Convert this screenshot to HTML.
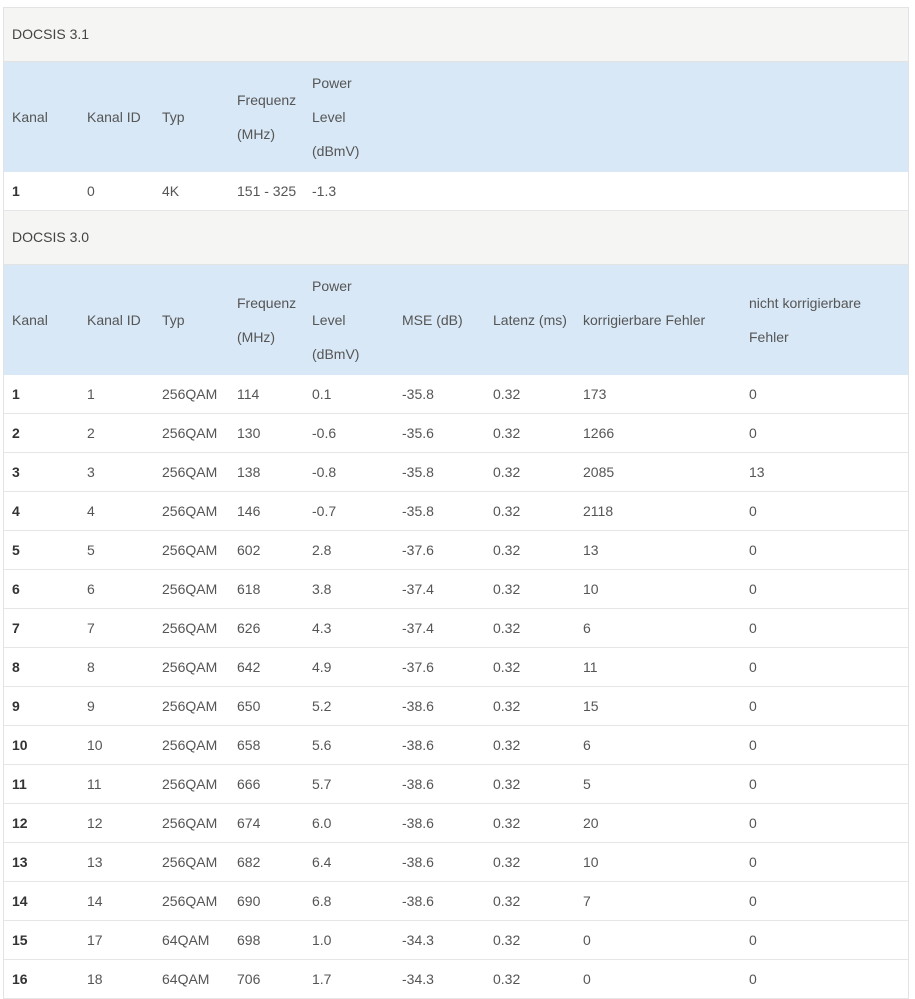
<!DOCTYPE html>
<html><head><meta charset="utf-8"><style>
body{margin:0;background:#fff;font-family:"Liberation Sans",sans-serif;font-size:14px;color:#555;}
.wrap{position:absolute;left:3px;top:7px;width:904px;border:1px solid #e3e3e3;border-bottom:none;}
.title{height:53px;background:#f5f5f3;line-height:53px;padding-left:8px;border-bottom:1px solid #e3e3e3;color:#444;}
.hdr{height:110px;background:#d8e8f6;display:flex;align-items:center;padding-left:8px;box-sizing:border-box;}
.row{height:38px;display:flex;align-items:center;padding-left:8px;border-bottom:1px solid #e6e6e6;background:#fff;}
.c{flex:none;line-height:34px;white-space:nowrap;}
.c1,.c2,.c3,.c4{width:75px}.c5{width:90px}.c6{width:91px}.c7{width:90px}.c8{width:166px}.c9{width:150px}
.row .c1{font-weight:bold;color:#333}
</style></head><body><div class="wrap">
<div class="title">DOCSIS 3.1</div>
<div class="hdr"><div class="c c1">Kanal</div><div class="c c2">Kanal ID</div><div class="c c3">Typ</div><div class="c c4">Frequenz<br>(MHz)</div><div class="c c5">Power<br>Level<br>(dBmV)</div></div>
<div class="row"><div class="c c1">1</div><div class="c c2">0</div><div class="c c3">4K</div><div class="c c4">151 - 325</div><div class="c c5">-1.3</div></div>
<div class="title">DOCSIS 3.0</div>
<div class="hdr"><div class="c c1">Kanal</div><div class="c c2">Kanal ID</div><div class="c c3">Typ</div><div class="c c4">Frequenz<br>(MHz)</div><div class="c c5">Power<br>Level<br>(dBmV)</div><div class="c c6">MSE (dB)</div><div class="c c7">Latenz (ms)</div><div class="c c8">korrigierbare Fehler</div><div class="c c9">nicht korrigierbare<br>Fehler</div></div>
<div class="row"><div class="c c1">1</div><div class="c c2">1</div><div class="c c3">256QAM</div><div class="c c4">114</div><div class="c c5">0.1</div><div class="c c6">-35.8</div><div class="c c7">0.32</div><div class="c c8">173</div><div class="c c9">0</div></div>
<div class="row"><div class="c c1">2</div><div class="c c2">2</div><div class="c c3">256QAM</div><div class="c c4">130</div><div class="c c5">-0.6</div><div class="c c6">-35.6</div><div class="c c7">0.32</div><div class="c c8">1266</div><div class="c c9">0</div></div>
<div class="row"><div class="c c1">3</div><div class="c c2">3</div><div class="c c3">256QAM</div><div class="c c4">138</div><div class="c c5">-0.8</div><div class="c c6">-35.8</div><div class="c c7">0.32</div><div class="c c8">2085</div><div class="c c9">13</div></div>
<div class="row"><div class="c c1">4</div><div class="c c2">4</div><div class="c c3">256QAM</div><div class="c c4">146</div><div class="c c5">-0.7</div><div class="c c6">-35.8</div><div class="c c7">0.32</div><div class="c c8">2118</div><div class="c c9">0</div></div>
<div class="row"><div class="c c1">5</div><div class="c c2">5</div><div class="c c3">256QAM</div><div class="c c4">602</div><div class="c c5">2.8</div><div class="c c6">-37.6</div><div class="c c7">0.32</div><div class="c c8">13</div><div class="c c9">0</div></div>
<div class="row"><div class="c c1">6</div><div class="c c2">6</div><div class="c c3">256QAM</div><div class="c c4">618</div><div class="c c5">3.8</div><div class="c c6">-37.4</div><div class="c c7">0.32</div><div class="c c8">10</div><div class="c c9">0</div></div>
<div class="row"><div class="c c1">7</div><div class="c c2">7</div><div class="c c3">256QAM</div><div class="c c4">626</div><div class="c c5">4.3</div><div class="c c6">-37.4</div><div class="c c7">0.32</div><div class="c c8">6</div><div class="c c9">0</div></div>
<div class="row"><div class="c c1">8</div><div class="c c2">8</div><div class="c c3">256QAM</div><div class="c c4">642</div><div class="c c5">4.9</div><div class="c c6">-37.6</div><div class="c c7">0.32</div><div class="c c8">11</div><div class="c c9">0</div></div>
<div class="row"><div class="c c1">9</div><div class="c c2">9</div><div class="c c3">256QAM</div><div class="c c4">650</div><div class="c c5">5.2</div><div class="c c6">-38.6</div><div class="c c7">0.32</div><div class="c c8">15</div><div class="c c9">0</div></div>
<div class="row"><div class="c c1">10</div><div class="c c2">10</div><div class="c c3">256QAM</div><div class="c c4">658</div><div class="c c5">5.6</div><div class="c c6">-38.6</div><div class="c c7">0.32</div><div class="c c8">6</div><div class="c c9">0</div></div>
<div class="row"><div class="c c1">11</div><div class="c c2">11</div><div class="c c3">256QAM</div><div class="c c4">666</div><div class="c c5">5.7</div><div class="c c6">-38.6</div><div class="c c7">0.32</div><div class="c c8">5</div><div class="c c9">0</div></div>
<div class="row"><div class="c c1">12</div><div class="c c2">12</div><div class="c c3">256QAM</div><div class="c c4">674</div><div class="c c5">6.0</div><div class="c c6">-38.6</div><div class="c c7">0.32</div><div class="c c8">20</div><div class="c c9">0</div></div>
<div class="row"><div class="c c1">13</div><div class="c c2">13</div><div class="c c3">256QAM</div><div class="c c4">682</div><div class="c c5">6.4</div><div class="c c6">-38.6</div><div class="c c7">0.32</div><div class="c c8">10</div><div class="c c9">0</div></div>
<div class="row"><div class="c c1">14</div><div class="c c2">14</div><div class="c c3">256QAM</div><div class="c c4">690</div><div class="c c5">6.8</div><div class="c c6">-38.6</div><div class="c c7">0.32</div><div class="c c8">7</div><div class="c c9">0</div></div>
<div class="row"><div class="c c1">15</div><div class="c c2">17</div><div class="c c3">64QAM</div><div class="c c4">698</div><div class="c c5">1.0</div><div class="c c6">-34.3</div><div class="c c7">0.32</div><div class="c c8">0</div><div class="c c9">0</div></div>
<div class="row"><div class="c c1">16</div><div class="c c2">18</div><div class="c c3">64QAM</div><div class="c c4">706</div><div class="c c5">1.7</div><div class="c c6">-34.3</div><div class="c c7">0.32</div><div class="c c8">0</div><div class="c c9">0</div></div>
</div></body></html>
